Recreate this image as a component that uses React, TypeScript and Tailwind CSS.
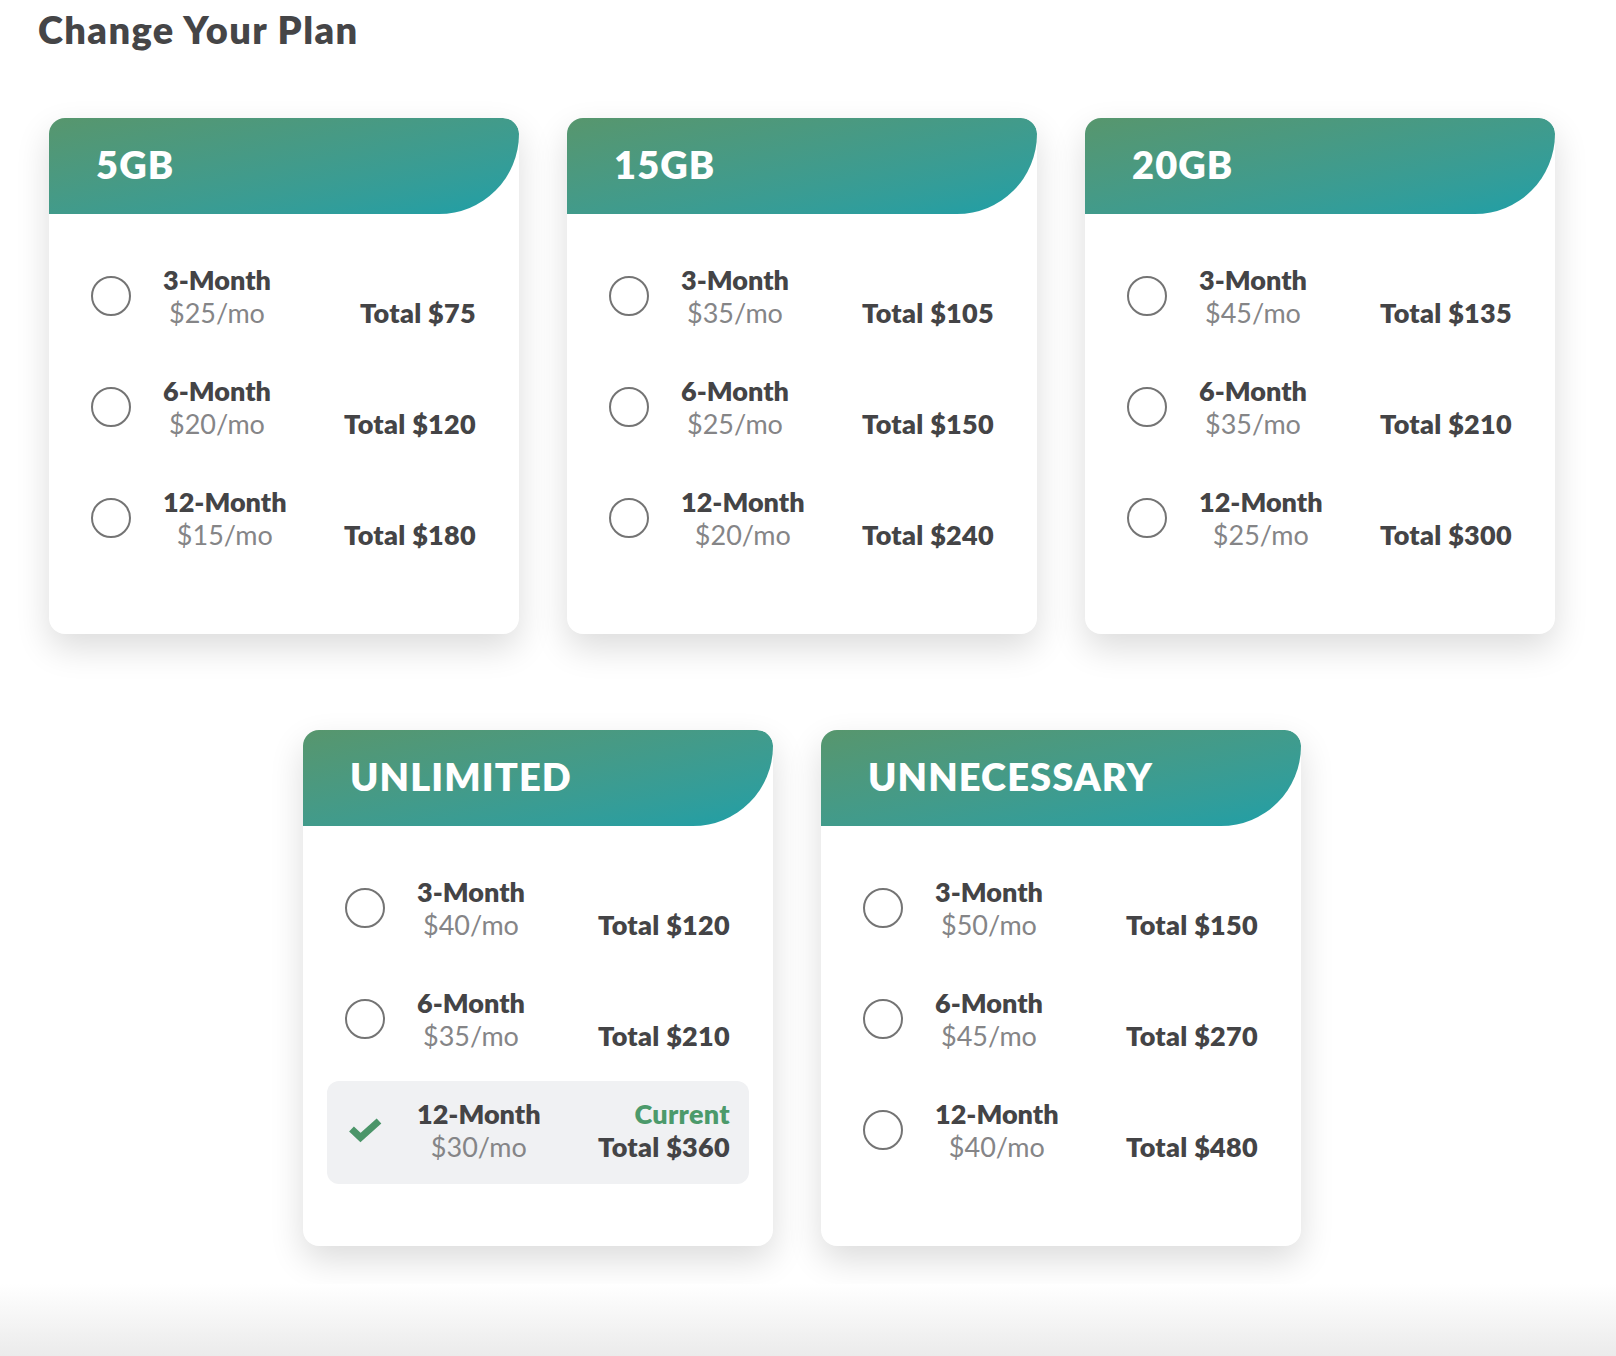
import React from "react";

type Option = {
  term: string;
  monthly: string;
  total: string;
  current?: boolean;
};

type Plan = {
  name: string;
  width: string;
  options: Option[];
};

const plans: Plan[] = [
  {
    name: "5GB",
    width: "w-[470px]",
    options: [
      { term: "3-Month", monthly: "$25/mo", total: "Total $75" },
      { term: "6-Month", monthly: "$20/mo", total: "Total $120" },
      { term: "12-Month", monthly: "$15/mo", total: "Total $180" },
    ],
  },
  {
    name: "15GB",
    width: "w-[470px]",
    options: [
      { term: "3-Month", monthly: "$35/mo", total: "Total $105" },
      { term: "6-Month", monthly: "$25/mo", total: "Total $150" },
      { term: "12-Month", monthly: "$20/mo", total: "Total $240" },
    ],
  },
  {
    name: "20GB",
    width: "w-[470px]",
    options: [
      { term: "3-Month", monthly: "$45/mo", total: "Total $135" },
      { term: "6-Month", monthly: "$35/mo", total: "Total $210" },
      { term: "12-Month", monthly: "$25/mo", total: "Total $300" },
    ],
  },
  {
    name: "UNLIMITED",
    width: "w-[470px]",
    options: [
      { term: "3-Month", monthly: "$40/mo", total: "Total $120" },
      { term: "6-Month", monthly: "$35/mo", total: "Total $210" },
      { term: "12-Month", monthly: "$30/mo", total: "Total $360", current: true },
    ],
  },
  {
    name: "UNNECESSARY",
    width: "w-[480px]",
    options: [
      { term: "3-Month", monthly: "$50/mo", total: "Total $150" },
      { term: "6-Month", monthly: "$45/mo", total: "Total $270" },
      { term: "12-Month", monthly: "$40/mo", total: "Total $480" },
    ],
  },
];

function Check() {
  return (
    <svg width="40" height="26" viewBox="0 0 40 26" fill="none">
      <path
        d="M6.5 12 L15.5 20.5 L34 4"
        stroke="#4b9569"
        strokeWidth="7"
        strokeLinecap="butt"
        strokeLinejoin="miter"
      />
    </svg>
  );
}

function OptionRow({ option }: { option: Option }) {
  return (
    <div
      className={`flex items-center rounded-xl pt-[16px] pb-[21px] pl-[18px] pr-[19px] ${
        option.current ? "bg-[#f0f1f3]" : ""
      }`}
    >
      <div className="flex h-10 w-10 shrink-0 items-center justify-center">
        {option.current ? (
          <Check />
        ) : (
          <span className="h-10 w-10 rounded-full border-2 border-[#747474]" />
        )}
      </div>
      <div className="ml-8 text-center text-[27px] leading-[33px]">
        <div className="font-extrabold text-[#444446]">{option.term}</div>
        <div className="text-[#858587]">{option.monthly}</div>
      </div>
      <div className="ml-auto text-right text-[27px] font-extrabold leading-[33px] tracking-[0.3px]">
        <div className="text-[#4c9a6b]">{option.current ? "Current" : "\u00a0"}</div>
        <div className="text-[#444446]">{option.total}</div>
      </div>
    </div>
  );
}

function PlanCard({ plan }: { plan: Plan }) {
  return (
    <div
      className={`${plan.width} overflow-hidden rounded-2xl bg-white shadow-[0_14px_34px_rgba(0,0,0,0.14)]`}
    >
      <div className="h-[96px] rounded-tr-2xl rounded-br-[80px] bg-gradient-to-br from-[#57966d] to-[#1d9fa7] pl-[47px] pt-[24px]">
        <h2 className="text-[38px] font-extrabold leading-[44px] tracking-[1.1px] text-white">
          {plan.name}
        </h2>
      </div>
      <div className="flex flex-col gap-2 px-6 pt-[33px] pb-[62px]">
        {plan.options.map((option) => (
          <OptionRow key={option.term} option={option} />
        ))}
      </div>
    </div>
  );
}

export default function App() {
  return (
    <div className="flex h-[1356px] flex-col overflow-hidden bg-white font-['Lato','Liberation_Sans',sans-serif]">
      <div className="w-[1604px] px-[38px] pt-[7px]">
        <h1 className="text-[38px] font-extrabold leading-[44px] tracking-[1.4px] text-[#454547]">
          Change Your Plan
        </h1>
        <div className="mt-[67px] flex flex-wrap justify-center gap-x-12 gap-y-24">
          {plans.map((plan) => (
            <PlanCard key={plan.name} plan={plan} />
          ))}
        </div>
      </div>
      <div className="mt-auto h-[72px] bg-gradient-to-b from-white to-[#ebebeb]" />
    </div>
  );
}
